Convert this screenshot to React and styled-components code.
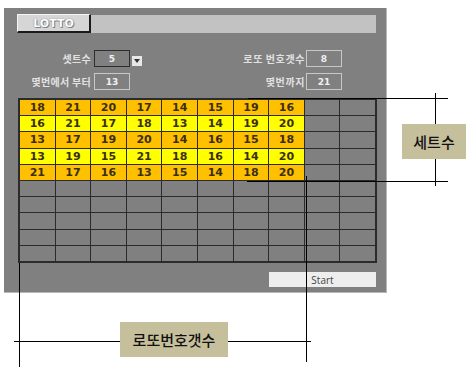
import React from 'react';
import styled, { createGlobalStyle } from 'styled-components';

const GlobalStyle = createGlobalStyle`
  html, body { margin: 0; padding: 0; background: #ffffff; }
  body { font-family: 'Noto Sans CJK KR', 'Noto Sans', sans-serif; }
`;

const sets = [
  [18, 21, 20, 17, 14, 15, 19, 16],
  [16, 21, 17, 18, 13, 14, 19, 20],
  [13, 17, 19, 20, 14, 16, 15, 18],
  [13, 19, 15, 21, 18, 16, 14, 20],
  [21, 17, 16, 13, 15, 14, 18, 20],
];
const COLS = 10;
const ROWS = 10;

export default function App() {
  const cells = [];
  for (let r = 0; r < ROWS; r++) {
    for (let c = 0; c < COLS; c++) {
      const value = sets[r] && sets[r][c];
      const tone = value === undefined ? 'empty' : r % 2 === 0 ? 'orange' : 'yellow';
      cells.push(<Cell key={`${r}-${c}`} $tone={tone}>{value}</Cell>);
    }
  }

  return (
    <Page>
      <GlobalStyle />
      <Panel>
        <TitleRow>
          <LottoButton>LOTTO</LottoButton>
          <TitleBar />
        </TitleRow>

        <FormArea>
          <FieldColumn>
            <Field>
              <Label $w={74}>셋트수</Label>
              <ValueBox $focused>5</ValueBox>
              <DropButton>
                <svg width="6" height="4" viewBox="0 0 6 4"><path d="M0 0h6L3 4z" fill="#333" /></svg>
              </DropButton>
            </Field>
            <Field>
              <Label $w={74}>몇번에서 부터</Label>
              <ValueBox>13</ValueBox>
            </Field>
          </FieldColumn>
          <FieldColumn>
            <Field>
              <Label $w={80} $gap={1} $spread>로또 번호갯수</Label>
              <ValueBox>8</ValueBox>
            </Field>
            <Field>
              <Label $w={80} $gap={1} $spread>몇번까지</Label>
              <ValueBox>21</ValueBox>
            </Field>
          </FieldColumn>
        </FormArea>

        <NumberGrid>{cells}</NumberGrid>

        <Footer>
          <StartButton>Start</StartButton>
        </Footer>
      </Panel>

      {/* callouts over the screenshot */}
      <HLine style={{ left: 248, top: 98, width: 200 }} />
      <HLine style={{ left: 247, top: 181, width: 201 }} />
      <VLine style={{ left: 435, top: 93, height: 93 }} />
      <Callout style={{ left: 402, top: 124, width: 64, height: 35 }}>세트수</Callout>

      <VLine style={{ left: 19, top: 263, height: 104 }} />
      <VLine style={{ left: 306, top: 176, height: 186 }} />
      <HLine style={{ left: 14, top: 341, width: 297 }} />
      <Callout style={{ left: 120, top: 322, width: 108, height: 35 }}>로또번호갯수</Callout>
    </Page>
  );
}

const Page = styled.div`
  position: relative;
  width: 468px;
  height: 367px;
  overflow: hidden;
  padding-top: 8px;
  box-sizing: border-box;
`;

const Panel = styled.div`
  margin-left: 4px;
  width: 383px;
  height: 285px;
  background: #808080;
  border-right: 1px solid #b8b8b8;
  border-bottom: 1px solid #b8b8b8;
  box-sizing: border-box;
  padding: 6px 10px 0 13px;
  display: flex;
  flex-direction: column;
`;

const TitleRow = styled.div`
  display: flex;
  height: 19px;
`;

const LottoButton = styled.div`
  width: 74px;
  height: 19px;
  box-sizing: border-box;
  background: #d6d6d6;
  border-top: 1px solid #f4f4f4;
  border-left: 1px solid #f4f4f4;
  border-right: 2px solid #1a1a1a;
  border-bottom: 2px solid #1a1a1a;
  display: flex;
  align-items: center;
  justify-content: center;
  font-family: 'DejaVu Sans', sans-serif;
  font-weight: 700;
  font-size: 11px;
  color: #ffffff;
  text-shadow: 0 0 1px #555, 1px 1px 0 #888;
`;

const TitleBar = styled.div`
  flex: 1;
  margin-top: 1px;
  height: 18px;
  background: #c2c2c2;
`;

const FormArea = styled.div`
  display: flex;
  justify-content: space-between;
  margin-top: 17px;
  padding-right: 34px;
  height: 40px;
`;

const FieldColumn = styled.div`
  display: flex;
  flex-direction: column;
  gap: 6px;
`;

const Field = styled.div`
  display: flex;
  align-items: center;
  height: 17px;
`;

const Label = styled.span`
  width: ${p => p.$w}px;
  margin-right: ${p => (p.$gap ?? 3)}px;
  text-align: right;
  font-size: 10px;
  font-weight: 700;
  color: #e2e2e2;
  letter-spacing: ${p => (p.$spread ? '0.6px' : '0.3px')};
  white-space: nowrap;
`;

const ValueBox = styled.div`
  width: 36px;
  height: 17px;
  box-sizing: border-box;
  border: 1px solid ${p => (p.$focused ? '#2e2e2e' : '#c8c8c8')};
  display: flex;
  align-items: center;
  justify-content: center;
  font-family: 'DejaVu Sans', sans-serif;
  font-size: 9px;
  font-weight: 700;
  color: #f0f0f0;
`;

const DropButton = styled.div`
  width: 10px;
  height: 10px;
  margin-left: 2px;
  margin-top: 4px;
  background: #e8e8e8;
  display: flex;
  align-items: center;
  justify-content: center;
`;

const NumberGrid = styled.div`
  margin-top: 8px;
  margin-left: 1px;
  width: 359px;
  height: 165px;
  box-sizing: border-box;
  display: grid;
  grid-template-columns: repeat(${COLS}, 1fr);
  grid-template-rows: repeat(${ROWS}, 1fr);
  gap: 1px;
  background: #2b2b2b;
  border: 2px solid #2b2b2b;
`;

const toneColors = { orange: '#ffc000', yellow: '#ffff00', empty: '#808080' };

const Cell = styled.div`
  background: ${p => toneColors[p.$tone]};
  display: flex;
  align-items: center;
  justify-content: center;
  font-family: 'DejaVu Sans', sans-serif;
  font-weight: 700;
  font-size: 11px;
  color: #3b2f12;
`;

const Footer = styled.div`
  display: flex;
  justify-content: flex-end;
  margin-top: 9px;
`;

const StartButton = styled.div`
  width: 107px;
  height: 15px;
  background: #eeeeee;
  display: flex;
  align-items: center;
  justify-content: center;
  font-family: 'Open Sans', sans-serif;
  font-size: 10px;
  color: #444;
`;

const HLine = styled.div`
  position: absolute;
  height: 1px;
  background: #000;
`;

const VLine = styled.div`
  position: absolute;
  width: 1px;
  background: #000;
`;

const Callout = styled.div`
  position: absolute;
  background: #c6bf9c;
  display: flex;
  align-items: center;
  justify-content: center;
  font-size: 15px;
  font-weight: 500;
  color: #111;
`;
